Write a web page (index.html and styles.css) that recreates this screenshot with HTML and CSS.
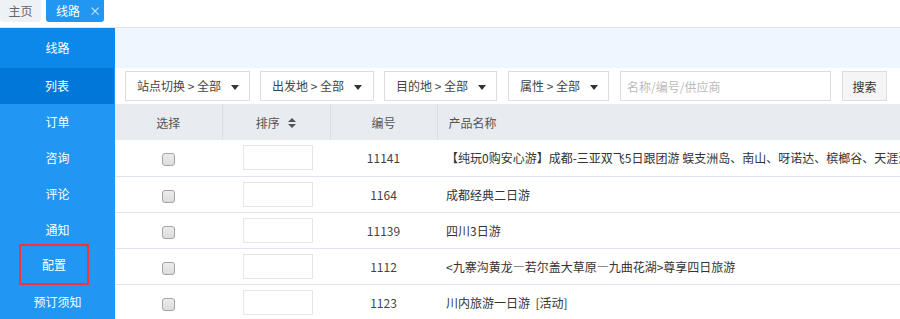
FILE: index.html
```html
<!DOCTYPE html>
<html lang="zh-CN">
  <head>
    <meta charset="utf-8">
    <title>线路 - 列表</title>
    <link rel="stylesheet" href="styles.css">
  </head>
  <body>
    <div class="tabs">
      <div class="tab">主页</div>
      <div class="tab active">线路<span class="close">×</span></div>
    </div>

    <div class="main">
      <div class="sidebar">
        <div class="side-title">线路</div>
        <div class="side-item current">列表</div>
        <div class="side-item">订单</div>
        <div class="side-item">咨询</div>
        <div class="side-item">评论</div>
        <div class="side-item">通知</div>
        <div class="side-item"><span class="marked">配置</span></div>
        <div class="side-item">预订须知</div>
      </div>

      <div class="content">
        <div class="band"></div>

        <div class="filters">
          <div class="dropdown">站点切换 &gt; 全部 <span class="caret"></span></div>
          <div class="dropdown">出发地 &gt; 全部 <span class="caret"></span></div>
          <div class="dropdown">目的地 &gt; 全部 <span class="caret"></span></div>
          <div class="dropdown">属性 &gt; 全部 <span class="caret"></span></div>
          <input class="search" type="text" placeholder="名称/编号/供应商">
          <button class="search-btn">搜索</button>
        </div>

        <table class="list">
          <thead>
            <tr>
              <th class="col-check">选择</th>
              <th class="col-sort">排序
                <svg class="sort-icon" width="8" height="12" viewBox="0 0 8 12"><path d="M4 1L8 5H0z M4 11L0 7h8z" fill="#555"/></svg>
              </th>
              <th class="col-id">编号</th>
              <th class="col-name">产品名称</th>
            </tr>
          </thead>
          <tbody>
            <tr>
              <td class="col-check"><span class="checkbox"></span></td>
              <td class="col-sort"><span class="sort-box"></span></td>
              <td class="col-id">11141</td>
              <td class="col-name">【纯玩0购安心游】成都-三亚双飞5日跟团游 蜈支洲岛、南山、呀诺达、槟榔谷、天涯海角</td>
            </tr>
            <tr>
              <td class="col-check"><span class="checkbox"></span></td>
              <td class="col-sort"><span class="sort-box"></span></td>
              <td class="col-id">1164</td>
              <td class="col-name">成都经典二日游</td>
            </tr>
            <tr>
              <td class="col-check"><span class="checkbox"></span></td>
              <td class="col-sort"><span class="sort-box"></span></td>
              <td class="col-id">11139</td>
              <td class="col-name">四川3日游</td>
            </tr>
            <tr>
              <td class="col-check"><span class="checkbox"></span></td>
              <td class="col-sort"><span class="sort-box"></span></td>
              <td class="col-id">1112</td>
              <td class="col-name">&lt;九寨沟黄龙—若尔盖大草原—九曲花湖&gt;尊享四日旅游</td>
            </tr>
            <tr>
              <td class="col-check"><span class="checkbox"></span></td>
              <td class="col-sort"><span class="sort-box"></span></td>
              <td class="col-id">1123</td>
              <td class="col-name">川内旅游一日游 &nbsp;[活动]</td>
            </tr>
          </tbody>
        </table>
      </div>
    </div>
  </body>
</html>
```

FILE: styles.css
```css
* {
  box-sizing: border-box;
}
body {
  margin: 0;
  width: 900px;
  height: 319px;
  overflow: hidden;
  font-family: "Microsoft YaHei", "Noto Sans CJK SC", "Liberation Sans", sans-serif;
  font-size: 12px;
  color: #333;
  background: #fff;
}
.tabs {
  display: flex;
  height: 28px;
  gap: 5px;
  border-bottom: 1px solid #e2e5ea;
}
.tab {
  width: 41px;
  height: 22px;
  line-height: 21px;
  text-align: center;
  color: #666;
  background: #eef1f6;
  border-radius: 0 0 3px 3px;
}
.tab.active {
  width: 58px;
  padding-left: 10px;
  text-align: left;
  color: #fff;
  background: #2196f3;
}
.tab .close {
  margin-left: 9px;
  font-size: 12px;
  color: #d8ecfd;
}
.main {
  display: flex;
}
.sidebar {
  width: 115px;
  flex-shrink: 0;
  background: #2196f3;
  color: #fff;
  font-size: 12px;
  height: 292px;
}
.side-title {
  height: 40px;
  line-height: 40px;
  text-align: center;
  background: #0b88e9;
}
.side-item {
  height: 36px;
  line-height: 36px;
  text-align: center;
}
.side-item.current {
  background: #0078d9;
  margin-right: 1px;
}
.marked {
  display: inline-block;
  width: 70px;
  height: 41px;
  line-height: 37px;
  margin-left: -7px;
  border: 2px solid #f4333a;
  vertical-align: top;
  margin-top: -4px;
}
.content {
  flex: 1;
  min-width: 0;
}
.band {
  height: 40px;
  background: #eef6ff;
}
.filters {
  display: flex;
  align-items: center;
  height: 36px;
  padding-left: 10px;
  gap: 11px;
}
.dropdown {
  height: 30px;
  line-height: 28px;
  padding: 0 10px 0 11px;
  border: 1px solid #ddd;
  color: #444;
  white-space: nowrap;
}
.dropdown:nth-child(1) { width: 125px; }
.dropdown:nth-child(2) { width: 114px; margin-left: -1px; }
.dropdown:nth-child(3) { width: 113px; margin-left: -1px; }
.dropdown:nth-child(4) { width: 101px; }
.caret {
  display: inline-block;
  width: 0;
  height: 0;
  margin-left: 7px;
  vertical-align: middle;
  border-left: 4px solid transparent;
  border-right: 4px solid transparent;
  border-top: 5px solid #333;
}
.search {
  width: 211px;
  height: 30px;
  padding: 0 6px;
  border: 1px solid #ddd;
  font-family: inherit;
  font-size: 12px;
  outline: none;
}
.search::placeholder {
  color: #bbb;
}
.search-btn {
  width: 45px;
  height: 30px;
  border: 1px solid #ddd;
  background: #f5f5f5;
  font-family: inherit;
  font-size: 12px;
  color: #333;
  padding: 0;
}
.list {
  border-collapse: collapse;
  width: 100%;
  table-layout: fixed;
}
.list th {
  height: 36px;
  background: #e8ebf0;
  font-weight: normal;
  color: #555;
  border-left: 1px solid #dadee4;
}
.list th:first-child {
  border-left: none;
}
.list td {
  height: 36px;
  border-top: 1px solid #dfe5ec;
  white-space: nowrap;
  overflow: hidden;
}
.list tbody tr:first-child td {
  border-top: none;
}
.col-check { width: 107px; text-align: center; }
.col-sort { width: 108px; text-align: center; }
.col-id { width: 107px; text-align: center; color: #444; }
.list .col-name { text-align: left; padding-left: 11px; }
.list td.col-name { padding-left: 9px; }
.sort-icon {
  margin-left: 6px;
  vertical-align: -1px;
}
.checkbox {
  display: inline-block;
  width: 13px;
  height: 13px;
  vertical-align: middle;
  border: 1px solid #a5a5a5;
  border-radius: 3px;
  background: linear-gradient(#ececec, #dcdcdc);
}
.sort-box {
  display: inline-block;
  width: 70px;
  height: 25px;
  vertical-align: middle;
  border: 1px solid #e6e6e6;
  margin-left: 4px;
}
```
